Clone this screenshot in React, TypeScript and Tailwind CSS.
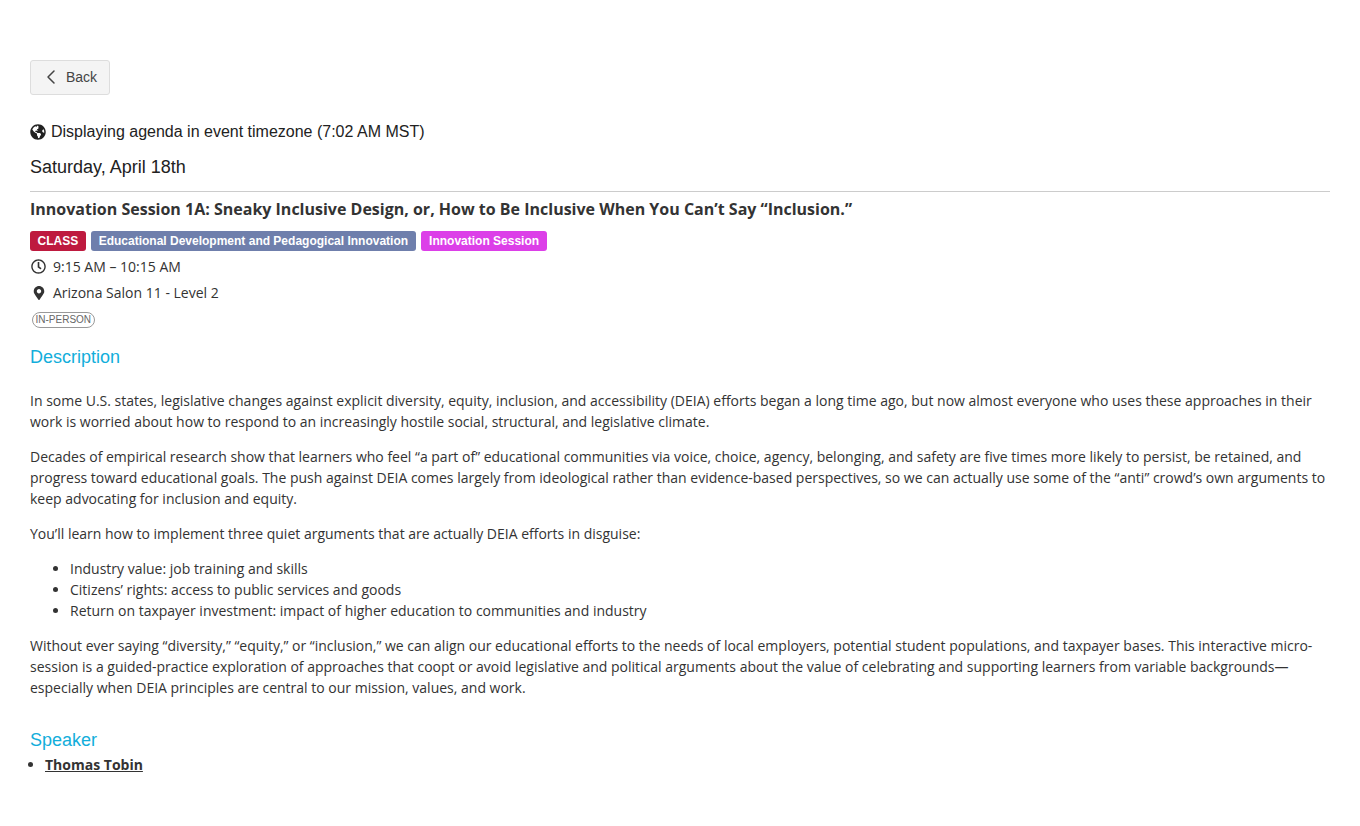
import { ChevronLeft } from "lucide-react";
import { FaGlobeAmericas, FaMapMarkerAlt, FaRegClock } from "react-icons/fa";

const openSans = "font-['Open_Sans',sans-serif]";
const arial = "font-['Liberation_Sans',Arial,sans-serif]";

export default function App() {
  return (
    <div className={`px-[30px] pt-[60px] pb-10 bg-white text-[#333] text-sm leading-[21px] ${openSans}`}>
      <button className={`flex items-center h-[35px] w-20 pl-[8px] pb-[1px] gap-[3px] bg-[#f4f4f4] border border-[#ddd] rounded-[3px] text-sm text-[#444] ${arial}`}>
        <ChevronLeft size={24} strokeWidth={1.5} />
        Back
      </button>

      <div className={`flex items-center gap-[5px] mt-[27px] h-5 text-base text-[#222] ${arial}`}>
        <FaGlobeAmericas size={16} className="text-[#222]" />
        <span>Displaying agenda in event timezone (7:02 AM MST)</span>
      </div>
      <h2 className={`mt-[15px] h-5 text-lg leading-5 text-[#222] ${arial}`}>Saturday, April 18th</h2>

      <div className="mt-[14px] border-t border-[#ccc]" />

      <h3 className="mt-[6px] text-base leading-[22px] font-bold text-[#333]">
        Innovation Session 1A: Sneaky Inclusive Design, or, How to Be Inclusive When You Can’t Say “Inclusion.”
      </h3>

      <div className={`flex gap-[5px] mt-[11px] text-xs font-bold text-white ${arial}`}>
        <span className="px-[7.5px] h-5 leading-5 rounded-[3px] bg-[#be1a3f]">CLASS</span>
        <span className="px-2 h-5 leading-5 rounded-[3px] bg-[#6f7fac]">Educational Development and Pedagogical Innovation</span>
        <span className="px-2 h-5 leading-5 rounded-[3px] bg-[#dc3fe8]">Innovation Session</span>
      </div>

      <div className="flex items-center mt-[5px] h-[21px]">
        <FaRegClock size={15} className="ml-[1px] mr-[7px] text-[#333]" />
        <span>9:15 AM – 10:15 AM</span>
      </div>
      <div className="flex items-center mt-[5px] h-[21px]">
        <FaMapMarkerAlt size={14} className="ml-[2px] mr-[7px] text-[#333]" />
        <span>Arizona Salon 11 - Level 2</span>
      </div>
      <div className="mt-[9px]">
        <span className={`inline-block h-4 px-[2.5px] ml-[2px] border border-[#999] rounded-full text-[10px] leading-[14px] text-[#666] align-top ${arial}`}>IN-PERSON</span>
      </div>

      <h4 className={`mt-[14px] h-5 text-lg leading-5 text-[#12aedb] ${arial}`}>Description</h4>

      <p className="mt-[23px]">
        In some U.S. states, legislative changes against explicit diversity, equity, inclusion, and accessibility (DEIA) efforts began a long time ago, but now almost everyone who uses these approaches in their work is worried about how to respond to an increasingly hostile social, structural, and legislative climate.
      </p>
      <p className="mt-[14px]">
        Decades of empirical research show that learners who feel “a part of” educational communities via voice, choice, agency, belonging, and safety are five times more likely to persist, be retained, and progress toward educational goals. The push against DEIA comes largely from ideological rather than evidence-based perspectives, so we can actually use some of the “anti” crowd’s own arguments to keep advocating for inclusion and equity.
      </p>
      <p className="mt-[14px]">You’ll learn how to implement three quiet arguments that are actually DEIA efforts in disguise:</p>
      <ul className="mt-[14px] pl-10 list-disc">
        <li>Industry value: job training and skills</li>
        <li>Citizens’ rights: access to public services and goods</li>
        <li>Return on taxpayer investment: impact of higher education to communities and industry</li>
      </ul>
      <p className="mt-[14px]">
        Without ever saying “diversity,” “equity,” or “inclusion,” we can align our educational efforts to the needs of local employers, potential student populations, and taxpayer bases. This interactive micro-session is a guided-practice exploration of approaches that coopt or avoid legislative and political arguments about the value of celebrating and supporting learners from variable backgrounds—especially when DEIA principles are central to our mission, values, and work.
      </p>

      <h4 className={`mt-[32px] h-5 text-lg leading-5 text-[#12aedb] ${arial}`}>Speaker</h4>
      <ul className="mt-[4px] pl-[15px] list-disc">
        <li className="font-bold underline">Thomas Tobin</li>
      </ul>
    </div>
  );
}
